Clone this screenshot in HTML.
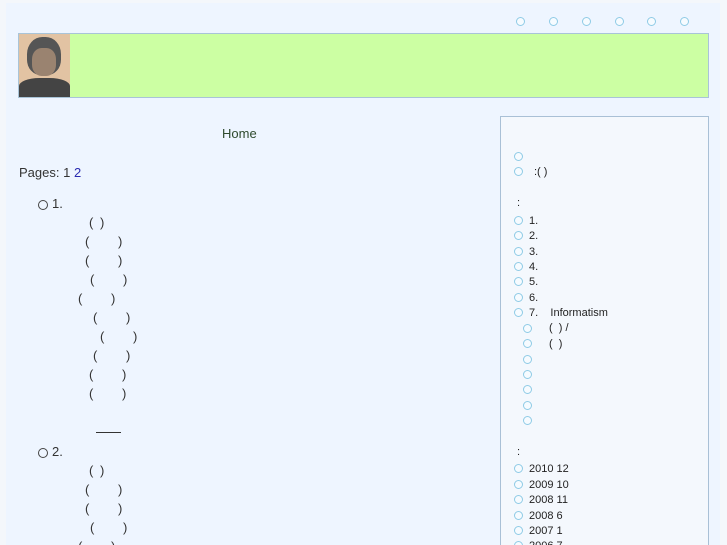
<!DOCTYPE html>
<html style="height:545px;overflow:hidden"><head><meta charset="utf-8"><style>
html,body{margin:0;width:727px;height:545px;overflow:hidden}
body{background:#f4f7fb;font-family:"Liberation Sans","Noto Sans CJK SC",sans-serif;color:#333;position:relative}
#pg{position:absolute;left:6px;top:3px;width:714px;height:542px;background:#eef5ff}
.a{position:absolute;white-space:nowrap}
.b{position:absolute;width:7px;height:7px;border:1.5px solid #8fcbe6;border-radius:50%;background:#f6fbff}
.s{font-size:11px;color:#222}
.m{font-size:13px;color:#333}
.o{position:absolute;width:8px;height:8px;border:1.3px solid #444;border-radius:50%}
#wrap{position:absolute;left:0;top:1px;width:727px;height:544px;overflow:hidden}
</style></head><body>
<div id="pg"></div>
<div id="wrap">
<div class="b" style="left:516px;top:16px"></div>
<div class="b" style="left:549px;top:16px"></div>
<div class="b" style="left:582px;top:16px"></div>
<div class="b" style="left:615px;top:16px"></div>
<div class="b" style="left:647px;top:16px"></div>
<div class="b" style="left:680px;top:16px"></div>
<div class="a" style="left:18px;top:32px;width:689px;height:63px;background:#ccffa3;border:1px solid #a9c4d8"></div>
<div class="a" style="left:19px;top:33px;width:51px;height:63px;background:#e2c3a3;overflow:hidden">
<div style="position:absolute;left:8px;top:3px;width:34px;height:38px;background:#555;border-radius:45% 45% 40% 40%"></div>
<div style="position:absolute;left:13px;top:14px;width:24px;height:28px;background:#9a8370;border-radius:40%"></div>
<div style="position:absolute;left:0;top:44px;width:51px;height:20px;background:#444;border-radius:40% 40% 0 0"></div>
</div>
<div class="a m" style="left:222px;top:125px;color:#2e4a2e">Home</div>
<div class="a m" style="left:19px;top:164px">Pages: 1 <span style="color:#2a2ab0">2</span></div>
<div class="o" style="left:38px;top:199px"></div><div class="a m" style="left:52px;top:195px">1.</div>
<div class="o" style="left:38px;top:447px"></div><div class="a m" style="left:52px;top:443px">2.</div>
<div class="a" style="left:96px;top:431px;width:25px;height:1px;background:#333"></div>
<div class="a m" style="left:89px;top:214px">(</div><div class="a m" style="left:100px;top:214px">)</div>
<div class="a m" style="left:85px;top:233px">(</div><div class="a m" style="left:118px;top:233px">)</div>
<div class="a m" style="left:85px;top:252px">(</div><div class="a m" style="left:118px;top:252px">)</div>
<div class="a m" style="left:90px;top:271px">(</div><div class="a m" style="left:123px;top:271px">)</div>
<div class="a m" style="left:78px;top:290px">(</div><div class="a m" style="left:111px;top:290px">)</div>
<div class="a m" style="left:93px;top:309px">(</div><div class="a m" style="left:126px;top:309px">)</div>
<div class="a m" style="left:100px;top:328px">(</div><div class="a m" style="left:133px;top:328px">)</div>
<div class="a m" style="left:93px;top:347px">(</div><div class="a m" style="left:126px;top:347px">)</div>
<div class="a m" style="left:89px;top:366px">(</div><div class="a m" style="left:122px;top:366px">)</div>
<div class="a m" style="left:89px;top:385px">(</div><div class="a m" style="left:122px;top:385px">)</div>
<div class="a m" style="left:89px;top:462px">(</div><div class="a m" style="left:100px;top:462px">)</div>
<div class="a m" style="left:85px;top:481px">(</div><div class="a m" style="left:118px;top:481px">)</div>
<div class="a m" style="left:85px;top:500px">(</div><div class="a m" style="left:118px;top:500px">)</div>
<div class="a m" style="left:90px;top:519px">(</div><div class="a m" style="left:123px;top:519px">)</div>
<div class="a m" style="left:78px;top:538px">(</div><div class="a m" style="left:111px;top:538px">)</div>
<div class="a" style="left:500px;top:115px;width:207px;height:440px;border:1px solid #a9c0d6;background:#f4f8fd"></div>
<div class="b" style="left:514px;top:151px"></div>
<div class="b" style="left:514px;top:166px"></div><div class="a s" style="left:534px;top:165px">:( )</div>
<div class="a s" style="left:517px;top:196px">:</div>
<div class="b" style="left:514px;top:215px"></div><div class="a s" style="left:529px;top:214px">1.</div>
<div class="b" style="left:514px;top:230px"></div><div class="a s" style="left:529px;top:229px">2.</div>
<div class="b" style="left:514px;top:246px"></div><div class="a s" style="left:529px;top:245px">3.</div>
<div class="b" style="left:514px;top:261px"></div><div class="a s" style="left:529px;top:260px">4.</div>
<div class="b" style="left:514px;top:276px"></div><div class="a s" style="left:529px;top:275px">5.</div>
<div class="b" style="left:514px;top:292px"></div><div class="a s" style="left:529px;top:291px">6.</div>
<div class="b" style="left:514px;top:307px"></div><div class="a s" style="left:529px;top:306px">7.&nbsp;&nbsp;&nbsp; Informatism</div>
<div class="b" style="left:523px;top:323px"></div><div class="a s" style="left:549px;top:321px">(&nbsp; ) /</div>
<div class="b" style="left:523px;top:338px"></div><div class="a s" style="left:549px;top:337px">(&nbsp; )</div>
<div class="b" style="left:523px;top:354px"></div>
<div class="b" style="left:523px;top:369px"></div>
<div class="b" style="left:523px;top:384px"></div>
<div class="b" style="left:523px;top:400px"></div>
<div class="b" style="left:523px;top:415px"></div>
<div class="a s" style="left:517px;top:445px">:</div>
<div class="b" style="left:514px;top:463px"></div><div class="a s" style="left:529px;top:462px">2010 12</div>
<div class="b" style="left:514px;top:479px"></div><div class="a s" style="left:529px;top:478px">2009 10</div>
<div class="b" style="left:514px;top:494px"></div><div class="a s" style="left:529px;top:493px">2008 11</div>
<div class="b" style="left:514px;top:510px"></div><div class="a s" style="left:529px;top:509px">2008 6</div>
<div class="b" style="left:514px;top:525px"></div><div class="a s" style="left:529px;top:524px">2007 1</div>
<div class="b" style="left:514px;top:540px"></div><div class="a s" style="left:529px;top:539px">2006 7</div>
</div>
</body></html>
